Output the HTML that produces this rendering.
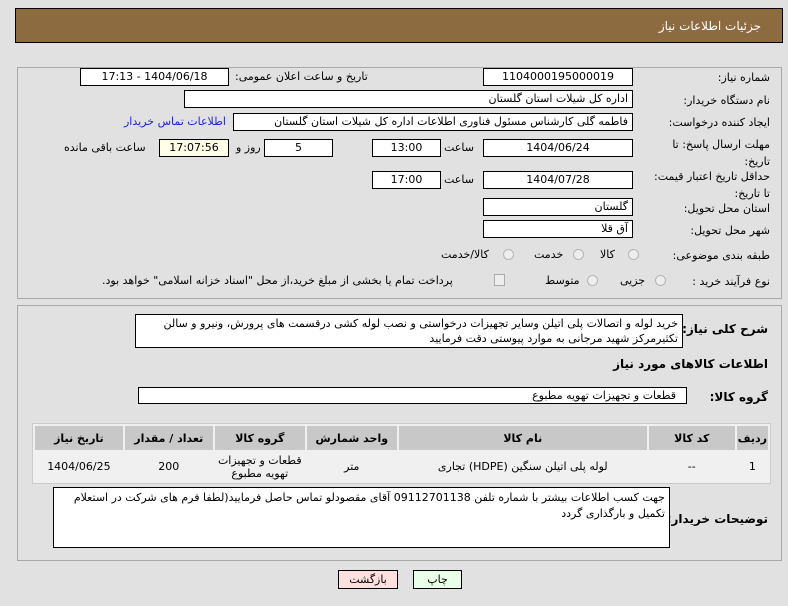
<!DOCTYPE html>
<html><head><meta charset="utf-8"><style>
body{margin:0;width:788px;height:606px;background:#e1e1e1;font-family:"DejaVu Sans","Liberation Sans",sans-serif;font-size:11px;color:#000;position:relative;overflow:hidden;direction:rtl}
.a{position:absolute;white-space:nowrap}
.b{position:absolute;background:#fff;border:1px solid #000;box-sizing:border-box;text-align:center;line-height:15px;font-size:11px}
.r{text-align:right;padding-right:4px}
.lab{position:absolute;right:18px;text-align:right;line-height:15px}
.rad{position:absolute;width:11px;height:11px;border-radius:50%;border:1px solid #b5b5b5;background:#eee;box-sizing:border-box}
.panel{position:absolute;border:1px solid #a8a8a8;box-sizing:border-box}
table{position:absolute;left:32px;top:423px;width:739px;border-collapse:separate;border-spacing:2px;background:#f0f0f0;border:1px solid #ccc;font-size:11px}
th{background:#c8c8c8;height:22px;font-weight:bold}
td{background:#f0f0f0;height:27px;text-align:center;line-height:13px}
</style></head><body>
<div class="a" style="left:15px;top:8px;width:768px;height:35px;background:#8c6b40;border:1px solid #000;box-sizing:border-box"></div>
<div class="a" style="right:27px;top:19px;color:#fff;font-size:12px">جزئیات اطلاعات نیاز</div>

<div class="panel" style="left:17px;top:67px;width:765px;height:232px"></div>
<div class="panel" style="left:17px;top:305px;width:765px;height:256px"></div>

<div class="lab" style="top:70px">شماره نیاز:</div>
<div class="b" style="left:483px;top:68px;width:150px;height:18px">1104000195000019</div>
<div class="a" style="left:235px;top:70px">تاریخ و ساعت اعلان عمومی:</div>
<div class="b" style="left:80px;top:68px;width:149px;height:18px">1404/06/18 - 17:13</div>

<div class="lab" style="top:93px">نام دستگاه خریدار:</div>
<div class="b r" style="left:184px;top:90px;width:449px;height:18px">اداره کل شیلات استان گلستان</div>

<div class="lab" style="top:115px">ایجاد کننده درخواست:</div>
<div class="b r" style="left:233px;top:113px;width:400px;height:18px">فاطمه گلی کارشناس مسئول فناوری اطلاعات اداره کل شیلات استان گلستان</div>
<div class="a" style="left:124px;top:115px;color:#2222dd">اطلاعات تماس خریدار</div>

<div class="lab" style="top:136px;line-height:17px">مهلت ارسال پاسخ: تا<br>تاریخ:</div>
<div class="b" style="left:483px;top:139px;width:150px;height:18px">1404/06/24</div>
<div class="a" style="left:444px;top:141px">ساعت</div>
<div class="b" style="left:372px;top:139px;width:69px;height:18px">13:00</div>
<div class="b" style="left:264px;top:139px;width:69px;height:18px">5</div>
<div class="a" style="left:236px;top:141px">روز و</div>
<div class="b" style="left:159px;top:139px;width:70px;height:18px;background:#ffffe8">17:07:56</div>
<div class="a" style="left:64px;top:141px">ساعت باقی مانده</div>

<div class="lab" style="top:168px;line-height:17px">حداقل تاریخ اعتبار قیمت:<br>تا تاریخ:</div>
<div class="b" style="left:483px;top:171px;width:150px;height:18px">1404/07/28</div>
<div class="a" style="left:444px;top:173px">ساعت</div>
<div class="b" style="left:372px;top:171px;width:69px;height:18px">17:00</div>

<div class="lab" style="top:201px">استان محل تحویل:</div>
<div class="b r" style="left:483px;top:198px;width:150px;height:18px">گلستان</div>
<div class="lab" style="top:223px">شهر محل تحویل:</div>
<div class="b r" style="left:483px;top:220px;width:150px;height:18px">آق قلا</div>

<div class="lab" style="top:248px">طبقه بندی موضوعی:</div>
<div class="rad" style="left:628px;top:249px"></div><div class="a" style="left:600px;top:248px">کالا</div>
<div class="rad" style="left:573px;top:249px"></div><div class="a" style="left:534px;top:248px">خدمت</div>
<div class="rad" style="left:503px;top:249px"></div><div class="a" style="left:441px;top:248px">کالا/خدمت</div>

<div class="lab" style="top:274px">نوع فرآیند خرید :</div>
<div class="rad" style="left:655px;top:275px"></div><div class="a" style="left:620px;top:274px">جزیی</div>
<div class="rad" style="left:587px;top:275px"></div><div class="a" style="left:545px;top:274px">متوسط</div>
<div class="a" style="left:494px;top:274px;width:9px;height:10px;border:1px solid #aaa;background:#eee"></div>
<div class="a" style="left:102px;top:274px">پرداخت تمام یا بخشی از مبلغ خرید،از محل "اسناد خزانه اسلامی" خواهد بود.</div>

<div class="a" style="right:20px;top:322px;font-weight:bold;font-size:12px">شرح کلی نیاز:</div>
<div class="b r" style="left:135px;top:314px;width:548px;height:34px;text-align:right;line-height:15px;white-space:normal;padding-top:1px">خرید لوله و اتصالات پلی اتیلن وسایر تجهیزات درخواستی و نصب لوله کشی درقسمت های پرورش، ونیرو و سالن تکثیرمرکز شهید مرجانی به موارد پیوستی دقت فرمایید</div>

<div class="a" style="right:20px;top:357px;font-weight:bold;font-size:12px">اطلاعات کالاهای مورد نیاز</div>
<div class="a" style="right:20px;top:390px;font-weight:bold;font-size:12px">گروه کالا:</div>
<div class="b r" style="left:138px;top:387px;width:549px;height:17px;padding-right:10px">قطعات و تجهیزات تهویه مطبوع</div>

<table>
<tr><th style="width:27px">ردیف</th><th style="width:84px">کد کالا</th><th style="width:246px">نام کالا</th><th style="width:88px">واحد شمارش</th><th style="width:88px">گروه کالا</th><th style="width:86px">تعداد / مقدار</th><th>تاریخ نیاز</th></tr>
<tr><td>1</td><td>--</td><td>لوله پلی اتیلن سنگین (HDPE) تجاری</td><td>متر</td><td>قطعات و تجهیزات<br>تهویه مطبوع</td><td>200</td><td>1404/06/25</td></tr>
</table>

<div class="a" style="right:20px;top:512px;font-weight:bold;font-size:12px">توضیحات خریدار:</div>
<div class="b r" style="left:53px;top:487px;width:617px;height:61px;text-align:right;line-height:16px;white-space:normal;padding-top:2px">جهت کسب اطلاعات بیشتر با شماره تلفن 09112701138 آقای مقصودلو تماس حاصل فرمایید(لطفا فرم های شرکت در استعلام تکمیل و بارگذاری گردد</div>

<div class="b" style="left:413px;top:570px;width:49px;height:19px;background:#eaffea;line-height:17px">چاپ</div>
<div class="b" style="left:338px;top:570px;width:60px;height:19px;background:#ffe0e0;line-height:17px">بازگشت</div>
</body></html>
